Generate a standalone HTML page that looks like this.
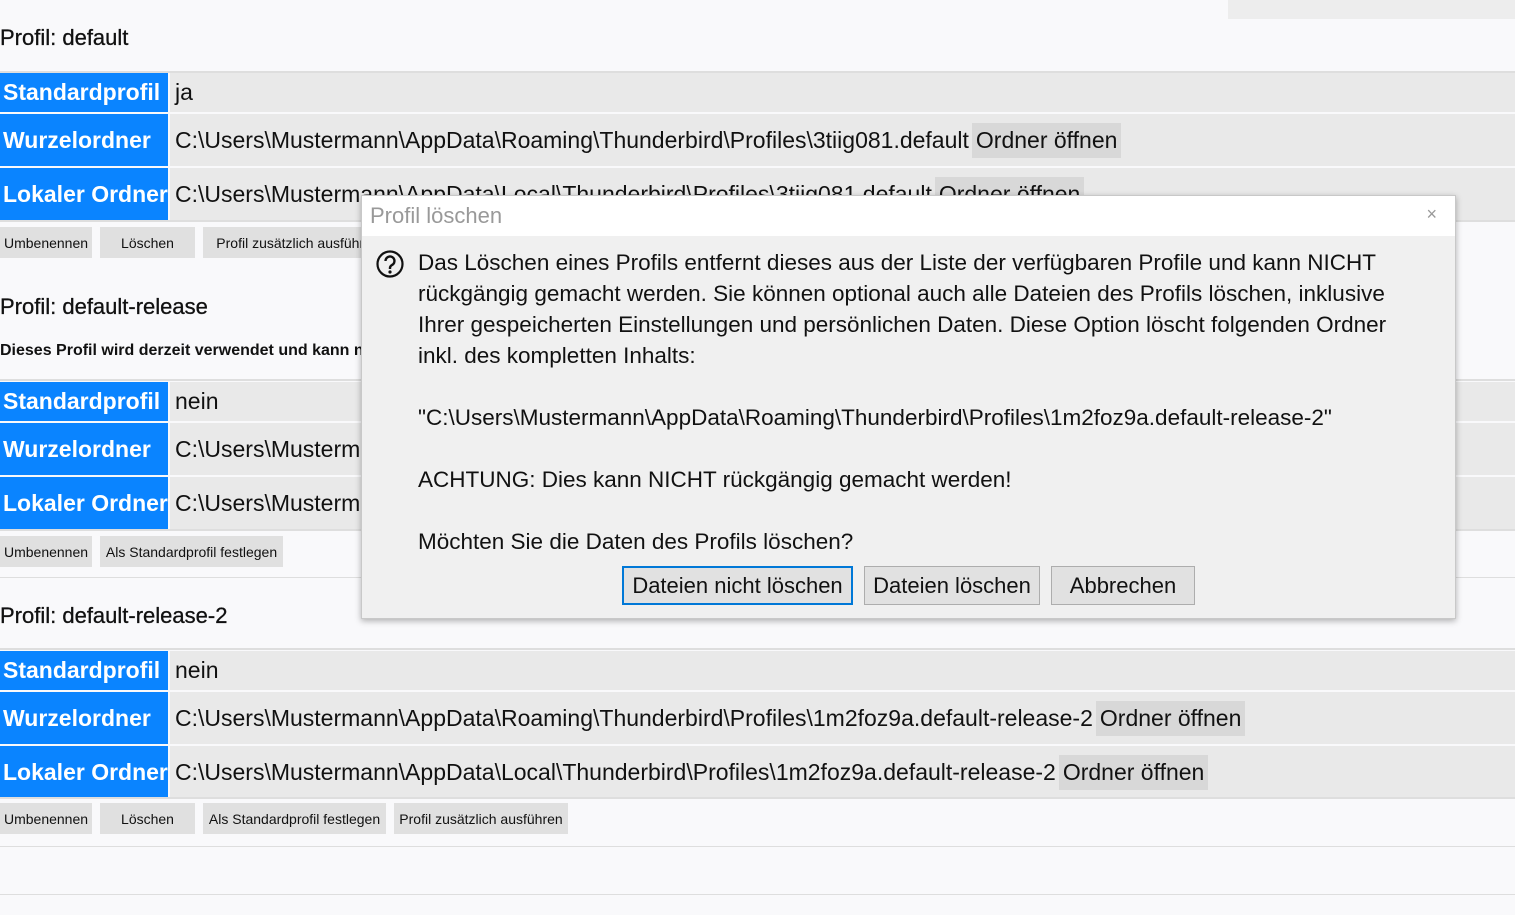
<!DOCTYPE html>
<html><head><meta charset="utf-8"><style>
*{margin:0;padding:0;box-sizing:border-box}
body{width:1515px;height:915px;background:#f9f9fb;font-family:"Liberation Sans",sans-serif;color:#111;position:relative;overflow:hidden}
.a{position:absolute;white-space:nowrap}
.h{font-size:22px;left:0;-webkit-text-stroke:0.3px #111}
.k{left:0;width:168px;background:#0a84ff;color:#fff;font-weight:bold;font-size:23px;padding-left:3px;display:flex;align-items:center;overflow:hidden}
.v{left:170px;right:0;background:#e9e9e9;font-size:23px;padding-left:5px;display:flex;align-items:center;overflow:hidden}
.ob{background:#d8d8d8;padding:4px 4px;margin-left:3px}
.line{left:0;right:0;height:2px;background:#dedede}
.b{background:#e0e0e0;font-size:14px;height:31px;display:flex;align-items:center;justify-content:center;padding:0 4px}
.dlg{left:361px;top:195px;width:1095px;height:424px;background:#f0f0f0;border:1px solid #c8c8c8;box-shadow:0 2px 6px rgba(0,0,0,.3)}
.db{position:absolute;top:370px;height:39px;background:#e1e1e1;border:1px solid #adadad;font-size:22px;display:flex;align-items:center;justify-content:center}
</style></head><body>
<div class="a" style="left:1228px;top:0;width:287px;height:19px;background:#ededed"></div>

<div class="a h" style="top:25px">Profil: default</div>
<div class="a line" style="top:71px"></div>
<div class="a k" style="top:73px;height:39px">Standardprofil</div><div class="a v" style="top:73px;height:39px">ja</div>
<div class="a k" style="top:114px;height:52px">Wurzelordner</div><div class="a v" style="top:114px;height:52px">C:\Users\Mustermann\AppData\Roaming\Thunderbird\Profiles\3tiig081.default<span class="ob">Ordner öffnen</span></div>
<div class="a k" style="top:168px;height:52px">Lokaler Ordner</div><div class="a v" style="top:168px;height:52px">C:\Users\Mustermann\AppData\Local\Thunderbird\Profiles\3tiig081.default<span class="ob">Ordner öffnen</span></div>
<div class="a line" style="top:220px"></div>
<div class="a b" style="left:0;top:227px;width:92px">Umbenennen</div>
<div class="a b" style="left:100px;top:227px;width:95px">Löschen</div>
<div class="a b" style="left:203px;top:227px;width:190px">Profil zusätzlich ausführen</div>

<div class="a h" style="top:294px">Profil: default-release</div>
<div class="a" style="left:0;top:342px;font-size:16px;font-weight:bold">Dieses Profil wird derzeit verwendet und kann nicht gelöscht werden.</div>
<div class="a line" style="top:379px"></div>
<div class="a k" style="top:382px;height:39px">Standardprofil</div><div class="a v" style="top:382px;height:39px">nein</div>
<div class="a k" style="top:423px;height:52px">Wurzelordner</div><div class="a v" style="top:423px;height:52px">C:\Users\Mustermann\AppData\Roaming\Thunderbird\Profiles</div>
<div class="a k" style="top:477px;height:52px">Lokaler Ordner</div><div class="a v" style="top:477px;height:52px">C:\Users\Mustermann\AppData\Local\Thunderbird\Profiles</div>
<div class="a line" style="top:529px"></div>
<div class="a b" style="left:0;top:536px;width:92px">Umbenennen</div>
<div class="a b" style="left:100px;top:536px;width:183px">Als Standardprofil festlegen</div>
<div class="a line" style="top:577px;height:1px"></div>

<div class="a h" style="top:603px">Profil: default-release-2</div>
<div class="a line" style="top:648px"></div>
<div class="a k" style="top:651px;height:39px">Standardprofil</div><div class="a v" style="top:651px;height:39px">nein</div>
<div class="a k" style="top:692px;height:52px">Wurzelordner</div><div class="a v" style="top:692px;height:52px">C:\Users\Mustermann\AppData\Roaming\Thunderbird\Profiles\1m2foz9a.default-release-2<span class="ob">Ordner öffnen</span></div>
<div class="a k" style="top:746px;height:52px">Lokaler Ordner</div><div class="a v" style="top:746px;height:52px">C:\Users\Mustermann\AppData\Local\Thunderbird\Profiles\1m2foz9a.default-release-2<span class="ob">Ordner öffnen</span></div>
<div class="a line" style="top:797px"></div>
<div class="a b" style="left:0;top:803px;width:92px">Umbenennen</div>
<div class="a b" style="left:100px;top:803px;width:95px">Löschen</div>
<div class="a b" style="left:203px;top:803px;width:183px">Als Standardprofil festlegen</div>
<div class="a b" style="left:394px;top:803px;width:174px">Profil zusätzlich ausführen</div>
<div class="a line" style="top:846px;height:1px"></div>
<div class="a line" style="top:894px;height:1px"></div>

<div class="a dlg">
<div style="position:absolute;left:0;top:0;right:0;height:40px;background:#fff"></div>
<div style="position:absolute;left:8px;top:7px;font-size:22px;color:#999">Profil löschen</div>
<div style="position:absolute;right:18px;top:8px;font-size:18px;color:#999">×</div>
<svg style="position:absolute;left:13px;top:53px" width="30" height="30" viewBox="0 0 30 30"><circle cx="15" cy="15" r="12.5" fill="none" stroke="#111" stroke-width="2.2"/><path d="M10.5 12a4.5 4.5 0 1 1 6.5 4c-1.5.8-2 1.6-2 3v1" fill="none" stroke="#111" stroke-width="2.4"/><circle cx="15" cy="23" r="1.6" fill="#111"/></svg>
<div style="position:absolute;left:56px;top:51px;font-size:22.5px;line-height:31px;white-space:nowrap">Das Löschen eines Profils entfernt dieses aus der Liste der verfügbaren Profile und kann NICHT<br>rückgängig gemacht werden. Sie können optional auch alle Dateien des Profils löschen, inklusive<br>Ihrer gespeicherten Einstellungen und persönlichen Daten. Diese Option löscht folgenden Ordner<br>inkl. des kompletten Inhalts:<br><br>"C:\Users\Mustermann\AppData\Roaming\Thunderbird\Profiles\1m2foz9a.default-release-2"<br><br>ACHTUNG: Dies kann NICHT rückgängig gemacht werden!<br><br>Möchten Sie die Daten des Profils löschen?</div>
<div class="db" style="left:260px;width:231px;border:2px solid #0078d7">Dateien nicht löschen</div>
<div class="db" style="left:502px;width:176px">Dateien löschen</div>
<div class="db" style="left:689px;width:144px">Abbrechen</div>
</div>
</body></html>
